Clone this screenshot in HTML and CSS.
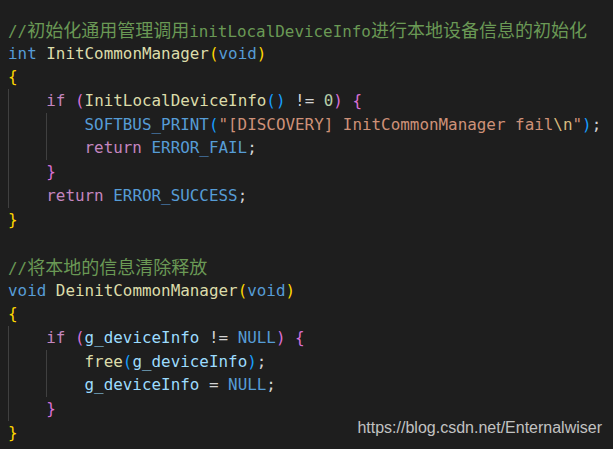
FILE: index.html
```html
<!DOCTYPE html>
<html>
<head>
<meta charset="utf-8">
<link rel="stylesheet" href="styles.css">
</head>
<body>
<div class="editor">
  <div class="line"><span class="cm">//<span class="cjk">初始化通用管理调用</span>initLocalDeviceInfo<span class="cjk">进行本地设备信息的初始化</span></span></div>
  <div class="line"><span class="kw">int</span> <span class="fn">InitCommonManager</span><span class="b1">(</span><span class="kw">void</span><span class="b1">)</span></div>
  <div class="line"><span class="b1">{</span></div>
  <div class="block">
    <div class="line"><span class="ctl">if</span> <span class="b2">(</span><span class="fn">InitLocalDeviceInfo</span><span class="b3">()</span> <span class="op">!=</span> <span class="num">0</span><span class="b2">)</span> <span class="b2">{</span></div>
    <div class="block">
      <div class="line"><span class="mac">SOFTBUS_PRINT</span><span class="b3">(</span><span class="str">"[DISCOVERY] InitCommonManager fail<span class="esc">\n</span>"</span><span class="b3">)</span><span class="op">;</span></div>
      <div class="line"><span class="ctl">return</span> <span class="mac">ERROR_FAIL</span><span class="op">;</span></div>
    </div>
    <div class="line"><span class="b2">}</span></div>
    <div class="line"><span class="ctl">return</span> <span class="mac">ERROR_SUCCESS</span><span class="op">;</span></div>
  </div>
  <div class="line"><span class="b1">}</span></div>
  <div class="line"></div>
  <div class="line"><span class="cm">//<span class="cjk">将本地的信息清除释放</span></span></div>
  <div class="line"><span class="kw">void</span> <span class="fn">DeinitCommonManager</span><span class="b1">(</span><span class="kw">void</span><span class="b1">)</span></div>
  <div class="line"><span class="b1">{</span></div>
  <div class="block">
    <div class="line"><span class="ctl">if</span> <span class="b2">(</span><span class="var">g_deviceInfo</span> <span class="op">!=</span> <span class="mac">NULL</span><span class="b2">)</span> <span class="b2">{</span></div>
    <div class="block">
      <div class="line"><span class="fn">free</span><span class="b3">(</span><span class="var">g_deviceInfo</span><span class="b3">)</span><span class="op">;</span></div>
      <div class="line"><span class="var">g_deviceInfo</span> <span class="op">=</span> <span class="mac">NULL</span><span class="op">;</span></div>
    </div>
    <div class="line"><span class="b2">}</span></div>
  </div>
  <div class="line"><span class="b1">}</span></div>
</div>
<div class="watermark">https://blog.csdn.net/Enternalwiser</div>
</body>
</html>
```
FILE: styles.css
```css
html, body {
  margin: 0;
  padding: 0;
  background: #1e1e1e;
}
body {
  width: 613px;
  height: 449px;
  overflow: hidden;
  position: relative;
}
.editor {
  padding: 18px 0 0 8px;
  font-family: "DejaVu Sans Mono", "Liberation Mono", monospace;
  font-size: 15.9px;
  color: #d4d4d4;
}
.line {
  height: 23.7px;
  line-height: 23.7px;
  white-space: pre;
}
.block {
  border-left: 1px solid #404040;
  padding-left: calc(4ch - 1px);
}
.cjk {
  font-family: "Noto Sans CJK SC", sans-serif;
  font-size: 18px;
}
.cm { color: #6a9955; }
.kw { color: #569cd6; }
.fn { color: #dcdcaa; }
.ctl { color: #c586c0; }
.mac { color: #569cd6; }
.var { color: #9cdcfe; }
.num { color: #b5cea8; }
.str { color: #ce9178; }
.esc { color: #d7ba7d; }
.op { color: #d4d4d4; }
.b1 { color: #ffd700; }
.b2 { color: #da70d6; }
.b3 { color: #179fff; }
.watermark {
  position: absolute;
  right: 11px;
  bottom: 12px;
  font-family: "Liberation Sans", Arial, sans-serif;
  font-size: 16px;
  color: #c2c2c2;
}
```
